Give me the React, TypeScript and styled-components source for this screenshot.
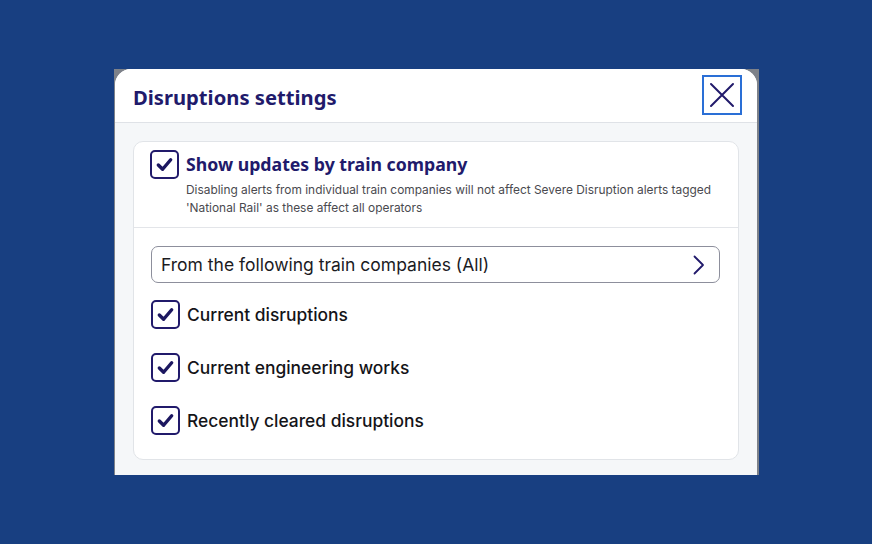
import React from "react";
import styled, { createGlobalStyle } from "styled-components";

const Global = createGlobalStyle`
  html, body { margin: 0; padding: 0; background: #183f81; }
  body { width: 872px; height: 544px; overflow: hidden; }
  * { box-sizing: border-box; }
`;

const Page = styled.div`
  width: 872px;
  height: 544px;
  background: #183f81;
  padding: 69px 0 0 114px;
`;

const Frame = styled.div`
  width: 645px;
  height: 406px;
  background: #7d8189;
  padding: 0 2px 0 1px;
  display: flex;
`;

const Modal = styled.div`
  flex: 1;
  display: flex;
  flex-direction: column;
  background: #f5f7f9;
  border-radius: 16px 16px 0 0;
  overflow: hidden;
`;

const Header = styled.header`
  height: 54px;
  flex: none;
  background: #ffffff;
  border-bottom: 1px solid #dfe2e7;
  display: flex;
  align-items: center;
  justify-content: space-between;
  padding: 0 15px 0 18px;
`;

const Title = styled.h1`
  margin: 2px 0 0;
  font-family: "Noto Sans", sans-serif;
  font-weight: 700;
  font-size: 20.2px;
  color: #211a6b;
`;

const CloseButton = styled.button`
  width: 40px;
  height: 40px;
  margin-top: -1px;
  border: 2px solid #2a6fd6;
  background: #ffffff;
  display: flex;
  align-items: center;
  justify-content: center;
  padding: 0;
  cursor: pointer;
`;

const Body = styled.div`
  flex: 1;
  padding: 18px 18px 0 18px;
`;

const Card = styled.section`
  background: #ffffff;
  border: 1px solid #e1e4e8;
  border-radius: 10px;
  height: 319px;
  display: flex;
  flex-direction: column;
`;

const CardTop = styled.div`
  display: flex;
  gap: 7px;
  padding: 8px 16px 10px 16px;
  border-bottom: 1px solid #e3e5e9;
`;

const TopText = styled.div`
  display: flex;
  flex-direction: column;
`;

const Heading = styled.div`
  font-family: "Noto Sans", sans-serif;
  font-weight: 700;
  font-size: 17.7px;
  line-height: 28px;
  color: #211a6b;
`;

const Note = styled.p`
  margin: 3px 0 0;
  font-family: "Inter", sans-serif;
  font-size: 11.9px;
  line-height: 18px;
  color: #4a4a4f;
  white-space: nowrap;
`;

const CardBody = styled.div`
  padding: 18px 18px 0 17px;
  display: flex;
  flex-direction: column;
`;

const Select = styled.button`
  height: 37px;
  width: 100%;
  border: 1px solid #8d8f9c;
  border-radius: 7px;
  background: #ffffff;
  display: flex;
  align-items: center;
  justify-content: space-between;
  padding: 0 14px 0 9px;
  font-family: "Inter", sans-serif;
  font-size: 17.5px;
  color: #1b1b1f;
  cursor: pointer;
`;

const Options = styled.div`
  display: flex;
  flex-direction: column;
  gap: 24px;
  margin-top: 17px;
`;

const Row = styled.label`
  display: flex;
  align-items: center;
  gap: 7px;
  font-family: "Inter", sans-serif;
  font-weight: 500;
  font-size: 17.4px;
  color: #141418;
`;

const Box = styled.span`
  width: 29px;
  height: 29px;
  flex: none;
  border: 2px solid #211a6b;
  border-radius: 5px;
  display: flex;
  align-items: center;
  justify-content: center;
`;

const Check = () => (
  <Box>
    <svg width="19" height="19" viewBox="0 0 20 20" fill="none">
      <path d="M3.5 10.5 L8 15 L16.5 5" stroke="#1c1760" strokeWidth="3.6" strokeLinecap="round" strokeLinejoin="round" />
    </svg>
  </Box>
);

const options = ["Current disruptions", "Current engineering works", "Recently cleared disruptions"];

export default function App() {
  return (
    <>
      <Global />
      <Page>
        <Frame>
          <Modal>
            <Header>
              <Title>Disruptions settings</Title>
              <CloseButton aria-label="Close">
                <svg width="26" height="26" viewBox="0 0 26 26" fill="none">
                  <path d="M2 2 L24 24 M24 2 L2 24" stroke="#211a6b" strokeWidth="2" strokeLinecap="round" />
                </svg>
              </CloseButton>
            </Header>
            <Body>
              <Card>
                <CardTop>
                  <Check />
                  <TopText>
                    <Heading>Show updates by train company</Heading>
                    <Note>
                      Disabling alerts from individual train companies will not affect Severe Disruption alerts tagged
                      <br />
                      'National Rail' as these affect all operators
                    </Note>
                  </TopText>
                </CardTop>
                <CardBody>
                  <Select>
                    <span>From the following train companies (All)</span>
                    <svg width="12" height="20" viewBox="0 0 12 20" fill="none">
                      <path d="M1.5 1.5 L10 10 L1.5 18.5" stroke="#211a6b" strokeWidth="1.8" strokeLinecap="round" strokeLinejoin="round" />
                    </svg>
                  </Select>
                  <Options>
                    {options.map((o) => (
                      <Row key={o}>
                        <Check />
                        {o}
                      </Row>
                    ))}
                  </Options>
                </CardBody>
              </Card>
            </Body>
          </Modal>
        </Frame>
      </Page>
    </>
  );
}
